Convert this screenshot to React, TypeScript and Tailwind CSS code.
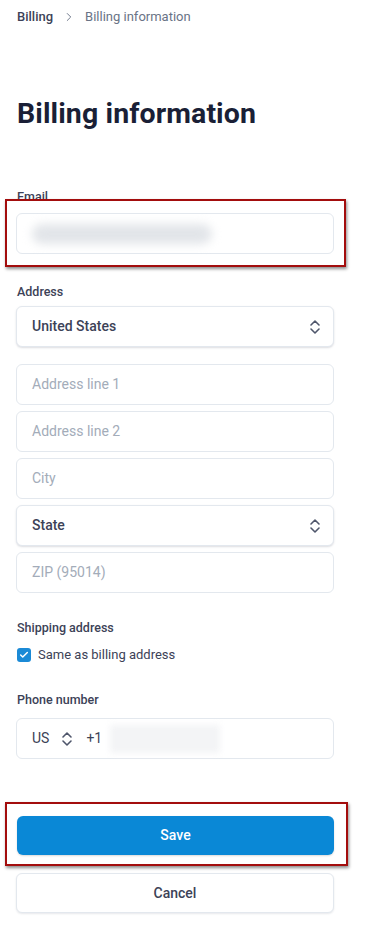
import { Check, ChevronRight } from "lucide-react";

const UpDown = () => (
  <svg width="12" height="16" viewBox="0 0 12 16" fill="none" className="text-[#4f566b]">
    <path d="M2 6l4-4 4 4M2 10l4 4 4-4" stroke="currentColor" strokeWidth="1.6" strokeLinecap="round" strokeLinejoin="round" />
  </svg>
);

const TextField = ({ placeholder }: { placeholder: string }) => (
  <div className="h-[41px] w-full rounded-md border border-[#e3e8ee] bg-white px-[15px] flex items-center">
    <span className="text-[14px] text-[#a3acb9]">{placeholder}</span>
  </div>
);

const SelectField = ({ value }: { value: string }) => (
  <div className="h-[41px] w-full rounded-md border border-[#e3e8ee] bg-white pl-[15px] pr-[12px] flex items-center justify-between shadow-[0_1px_2px_rgba(60,66,87,0.18)]">
    <span className="text-[14px] font-medium text-[#3c4257]">{value}</span>
    <UpDown />
  </div>
);

const Label = ({ children }: { children: string }) => (
  <p className="text-[12.5px] font-medium text-[#3c4257] leading-[16px]">{children}</p>
);

export default function App() {
  return (
    <div className="min-h-[939px] bg-white pl-[16px] pr-[38px] font-['Roboto','Liberation_Sans',sans-serif]">
      {/* breadcrumb */}
      <div className="pt-[9px] flex items-center h-[25px] text-[13px] leading-[16px]">
        <span className="ml-[1px] font-medium text-[#3c4257]">Billing</span>
        <ChevronRight className="w-[14px] h-[14px] mx-[9px] text-[#697386]" strokeWidth={1.6} />
        <span className="text-[#697386]">Billing information</span>
      </div>

      <h1 className="mt-[71px] ml-[1px] text-[28.5px] leading-[36px] font-bold text-[#1a1f36] tracking-[0.1px]">
        Billing information
      </h1>

      {/* email */}
      <div className="mt-[57px] ml-[1px]">
        <Label>Email</Label>
      </div>
      <div className="relative mt-[8px]">
        <div className="h-[41px] w-full rounded-md border border-[#e3e8ee] bg-white px-[15px] flex items-center">
          <div className="h-[20px] w-[180px] rounded-full bg-[#e2e5e9] blur-[5px]" />
        </div>
        <div className="absolute -left-[11px] -right-[12px] -top-[14px] -bottom-[13px] border-2 border-[#a30d0d] shadow-[1px_2px_3px_rgba(0,0,0,0.45)]" />
      </div>

      {/* address */}
      <div className="mt-[30px] ml-[1px]">
        <Label>Address</Label>
      </div>
      <div className="mt-[6px] flex flex-col gap-[6px]">
        <SelectField value="United States" />
        <div className="mt-[11px]">
          <TextField placeholder="Address line 1" />
        </div>
        <TextField placeholder="Address line 2" />
        <TextField placeholder="City" />
        <SelectField value="State" />
        <TextField placeholder="ZIP (95014)" />
      </div>

      {/* shipping */}
      <div className="mt-[27px] ml-[1px]">
        <Label>Shipping address</Label>
      </div>
      <label className="mt-[11px] ml-[1px] flex items-center gap-[7px]">
        <span className="w-[14px] h-[14px] rounded-[3px] bg-[#1b8ad6] flex items-center justify-center">
          <Check className="w-[10px] h-[10px] text-white" strokeWidth={3.5} />
        </span>
        <span className="text-[13px] text-[#3c4257] leading-[16px]">Same as billing address</span>
      </label>

      {/* phone */}
      <div className="mt-[29px] ml-[1px]">
        <Label>Phone number</Label>
      </div>
      <div className="mt-[10px] h-[41px] w-full rounded-md border border-[#e3e8ee] bg-white pl-[15px] flex items-center">
        <span className="text-[14px] text-[#3c4257]">US</span>
        <span className="ml-[12px]"><UpDown /></span>
        <span className="ml-[13px] text-[14px] text-[#3c4257]">+1</span>
        <div className="ml-[8px] h-[28px] w-[110px] bg-[#f3f4f6] blur-[3px]" />
      </div>

      {/* actions */}
      <div className="relative mt-[57px] ml-[1px]">
        <button className="h-[39px] w-full rounded-md bg-[#0a88d6] text-white text-[14px] font-medium shadow-[0_1px_2px_rgba(0,0,0,0.15)]">
          Save
        </button>
        <div className="absolute -left-[12px] -right-[14px] -top-[14px] -bottom-[11px] border-2 border-[#a30d0d] shadow-[1px_2px_3px_rgba(0,0,0,0.45)]" />
      </div>
      <button className="mt-[18px] h-[40px] w-full rounded-md border border-[#e3e8ee] bg-white text-[14px] font-medium text-[#3c4257] shadow-[0_1px_2px_rgba(60,66,87,0.12)]">
        Cancel
      </button>
    </div>
  );
}
